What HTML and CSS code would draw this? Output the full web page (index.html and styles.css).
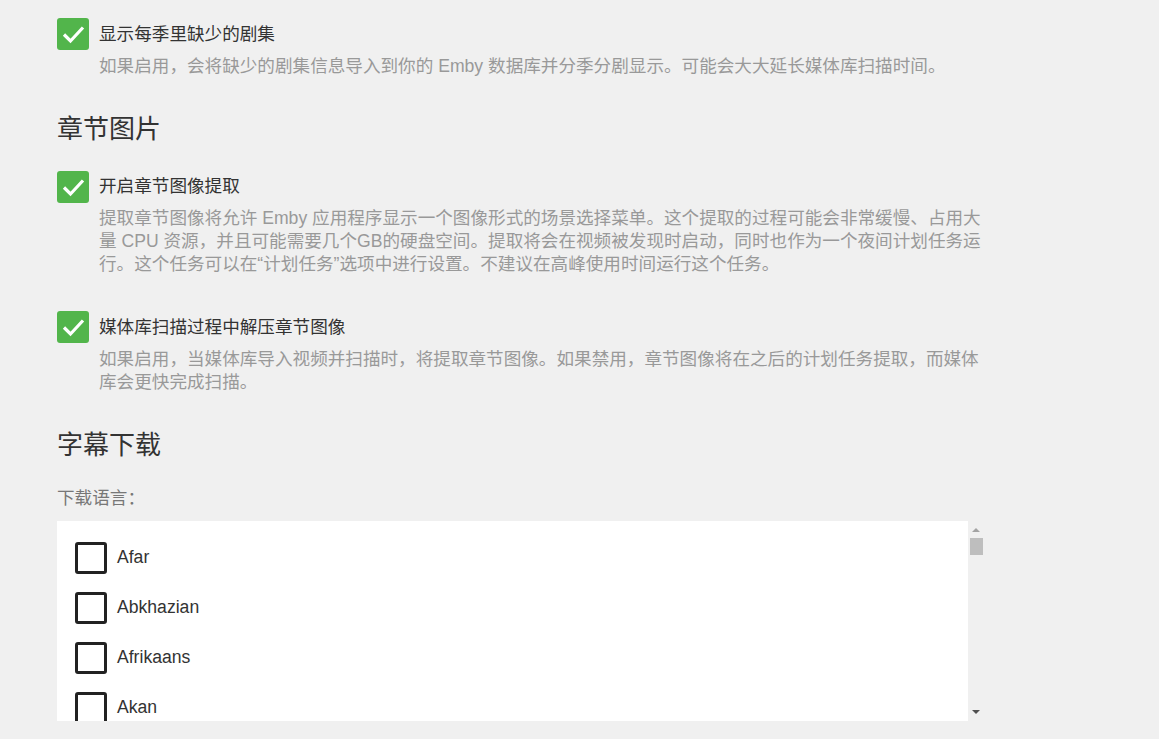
FILE: index.html
```html
<!DOCTYPE html>
<html lang="zh-CN">
<head>
  <meta charset="UTF-8">
  <meta name="viewport" content="width=device-width, initial-scale=1.0">
  <title>媒体库设置</title>
  <link rel="stylesheet" href="styles.css">
</head>
<body>
  <div class="page">

    <!-- Missing episodes -->
    <div class="option">
      <label class="check-row">
        <span class="check on">
          <svg viewBox="0 0 32 32"><polyline points="7,16.5 13.5,23 26,9.5"/></svg>
        </span>
        <span class="check-label">显示每季里缺少的剧集</span>
      </label>
      <div class="desc">如果启用，会将缺少的剧集信息导入到你的 Emby 数据库并分季分剧显示。可能会大大延长媒体库扫描时间。</div>
    </div>

    <!-- Chapter images -->
    <h2 class="section-title">章节图片</h2>

    <div class="option">
      <label class="check-row">
        <span class="check on">
          <svg viewBox="0 0 32 32"><polyline points="7,16.5 13.5,23 26,9.5"/></svg>
        </span>
        <span class="check-label">开启章节图像提取</span>
      </label>
      <div class="desc">提取章节图像将允许 Emby 应用程序显示一个图像形式的场景选择菜单。这个提取的过程可能会非常缓慢、占用大量 CPU 资源，并且可能需要几个GB的硬盘空间。提取将会在视频被发现时启动，同时也作为一个夜间计划任务运行。这个任务可以在“计划任务”选项中进行设置。不建议在高峰使用时间运行这个任务。</div>
    </div>

    <div class="option">
      <label class="check-row">
        <span class="check on">
          <svg viewBox="0 0 32 32"><polyline points="7,16.5 13.5,23 26,9.5"/></svg>
        </span>
        <span class="check-label">媒体库扫描过程中解压章节图像</span>
      </label>
      <div class="desc">如果启用，当媒体库导入视频并扫描时，将提取章节图像。如果禁用，章节图像将在之后的计划任务提取，而媒体库会更快完成扫描。</div>
    </div>

    <!-- Subtitles -->
    <h2 class="section-title">字幕下载</h2>

    <div class="field-label">下载语言：</div>

    <div class="lang-box">
      <div class="lang-list" id="langList">
        <!-- rows inserted by script below -->
      </div>
      <div class="scrollbar">
        <span class="arrow up"></span>
        <span class="thumb"></span>
        <span class="arrow down"></span>
      </div>
    </div>

  </div>

  <script>
    const languages = ['Afar', 'Abkhazian', 'Afrikaans', 'Akan'];
    const langList = document.getElementById('langList');

    languages.forEach(name => {
      const row = document.createElement('label');
      row.className = 'check-row lang-row';
      row.innerHTML = `
        <span class="check off"></span>
        <span class="lang-name">${name}</span>
      `;
      langList.appendChild(row);
    });
  </script>
</body>
</html>
```

FILE: styles.css
```css
body {
  margin: 0;
  background-color: #f0f0f0;
  color: #333;
  font-family: 'Liberation Sans', 'Noto Sans CJK SC', sans-serif;
  font-size: 17.6px;
}
.page {
  padding: 18px 0 0 57px;
}
.option {
  margin-bottom: 35px;
}
.check-row {
  display: flex;
  align-items: center;
  gap: 10px;
  height: 32px;
}
.check {
  flex: none;
  width: 32px;
  height: 32px;
  box-sizing: border-box;
  border-radius: 3px;
}
.check.on {
  background-color: #52b54b;
}
.check.on svg {
  display: block;
  width: 32px;
  height: 32px;
  fill: none;
  stroke: #fff;
  stroke-width: 3.2;
}
.check.off {
  border: 3px solid #222;
  background: #fff;
}
.check-label {
  line-height: 23px;
}
.desc {
  margin: 4.5px 0 0 42px;
  max-width: 886px;
  color: #999;
  line-height: 23px;
}
.section-title {
  margin: 0 0 26px;
  font-size: 26px;
  font-weight: normal;
  line-height: 32px;
  color: #333;
}
.field-label {
  color: #777;
  line-height: 23px;
  margin-bottom: 11px;
}
.lang-box {
  display: flex;
  width: 927px;
  height: 200px;
}
.lang-list {
  flex: 1;
  background: #fff;
  padding: 21px 0 0 18px;
  overflow: hidden;
  display: flex;
  flex-direction: column;
  gap: 18px;
}
.lang-row {
  flex: none;
}
.lang-name {
  color: #333;
}
.scrollbar {
  width: 16px;
  display: flex;
  flex-direction: column;
  align-items: center;
  padding-top: 7px;
  box-sizing: border-box;
}
.arrow {
  width: 0;
  height: 0;
  border-left: 4px solid transparent;
  border-right: 4px solid transparent;
}
.arrow.up {
  border-bottom: 4px solid #a3a3a3;
}
.arrow.down {
  border-top: 4px solid #505050;
  margin-top: auto;
  margin-bottom: 7px;
}
.thumb {
  width: 13px;
  height: 17px;
  margin-top: 6px;
  background: #bebebe;
}
```
